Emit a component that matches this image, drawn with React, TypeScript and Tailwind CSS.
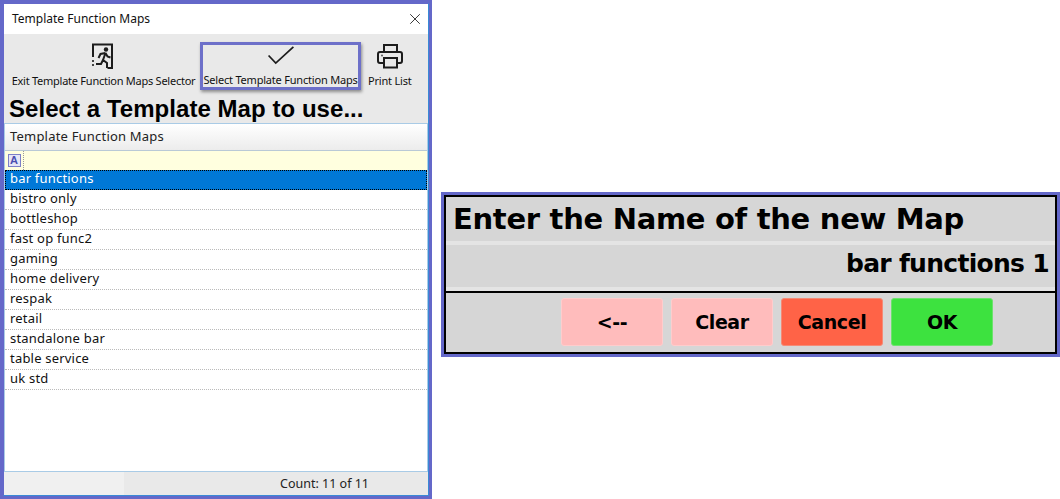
import { X } from "lucide-react";

const maps = [
  "bar functions",
  "bistro only",
  "bottleshop",
  "fast op func2",
  "gaming",
  "home delivery",
  "respak",
  "retail",
  "standalone bar",
  "table service",
  "uk std",
];

const keypad = [
  { label: "<--", color: "bg-[#ffbcbc] border-[#ffcccc]" },
  { label: "Clear", color: "bg-[#ffbcbc] border-[#ffcccc]" },
  { label: "Cancel", color: "bg-[#ff6347] border-[#f58a76]" },
  { label: "OK", color: "bg-[#3de23f] border-[#6ce36d]" },
];

function ExitIcon() {
  return (
    <svg viewBox="0 0 22 26" className="-ml-[3px] h-[26px] w-[22px]" fill="none" stroke="#1c1c1c">
      <path d="M2 14V1.500h19V25h-4.500" strokeWidth="2" />
      <path d="M2 17v2M2 21v2" strokeWidth="1.6" />
      <circle cx="15" cy="6.500" r="2.200" fill="#1c1c1c" stroke="none" />
      <path d="M14.500 10l-2.500 7M14.500 10l-5 1-2 4M14.500 10l2 3.500 3 1M12 17l-2 4H5M12 17l4 3v5" strokeWidth="2" />
    </svg>
  );
}

function CheckIcon() {
  return (
    <svg viewBox="0 0 30 22" className="h-[22px] w-[30px]" fill="none" stroke="#1c1c1c" strokeWidth="1.8">
      <path d="M2 11l7.500 8L28 2" />
    </svg>
  );
}

function PrinterIcon() {
  return (
    <svg viewBox="0 0 26 26" className="size-[26px]" fill="none" stroke="#1c1c1c" strokeWidth="2">
      <path d="M7 9V2h13v7" />
      <path d="M6 20H3a2 2 0 0 1-2-2v-7a2 2 0 0 1 2-2h20a2 2 0 0 1 2 2v7a2 2 0 0 1-2 2h-3" />
      <path d="M7 15h13v9.500H7z" />
      <circle cx="5" cy="12.500" r="1" fill="#555" stroke="none" />
    </svg>
  );
}

export default function App() {
  return (
    <div className="flex h-[499px] w-[1060px] items-start overflow-hidden bg-white font-['Noto_Sans',sans-serif]">
      <div className="h-[499px] w-[432px] shrink-0 border-[3px] border-[#6468c9]">
        <div className="flex h-full flex-col border border-[#3a8ad6] border-l-[#6468c9] border-t-[#6468c9] bg-[#e9e9e9]">
          <div className="flex h-[30px] shrink-0 items-center justify-between bg-white pl-2 pr-1 text-[12px] text-[#111]">
            <span>Template Function Maps</span>
            <X size={18} strokeWidth={1.1} />
          </div>

          <div className="flex h-[62px] shrink-0 items-start pl-[7px] text-[11px] tracking-[-0.25px] text-[#111]">
            <div className="flex w-[185px] flex-col items-center pt-[9px]">
              <ExitIcon />
              <span className="mt-[4px] whitespace-nowrap">Exit Template Function Maps Selector</span>
            </div>
            <div className="ml-[4px] mt-[8px] flex h-[48px] w-[161px] flex-col items-center border-[3px] border-[#6d70c9] tracking-[-0.2px] shadow-[1px_2px_3px_rgba(0,0,0,0.4)]">
              <CheckIcon />
              <span className="mt-[7px] whitespace-nowrap leading-[14px]">Select Template Function Maps</span>
            </div>
            <div className="ml-[7px] flex flex-col items-center pt-[9px] tracking-[-0.2px]">
              <PrinterIcon />
              <span className="mt-[4px] whitespace-nowrap">Print List</span>
            </div>
          </div>

          <h1 className="h-[27px] shrink-0 pl-[5px] font-['Liberation_Sans',sans-serif] text-[24px] font-bold leading-[25px] tracking-[0.05px] text-black">
            Select a Template Map to use...
          </h1>

          <div className="flex min-h-0 flex-1 flex-col border border-[#a9cbe6] bg-white">
            <div className="flex h-[27px] shrink-0 items-center border-b border-[#b9c9d6] bg-gradient-to-b from-white to-[#ececec] pl-[5px] text-[13px] tracking-[0.2px] text-[#222]">
              Template Function Maps
            </div>
            <div className="flex h-[19px] shrink-0 items-center bg-[#ffffdf]">
              <div className="flex h-full w-[19px] items-center justify-center border-r border-dotted border-[#999]">
                <span className="flex size-[13px] items-center justify-center border border-[#7c80c8] bg-[#e6e6f6] font-['Liberation_Sans',sans-serif] text-[11px] font-bold leading-none text-[#4a4fb0]">
                  A
                </span>
              </div>
            </div>
            {maps.map((name, i) => (
              <div
                key={name}
                className={
                  i === 0
                    ? "flex h-[20px] shrink-0 items-center border border-dotted border-black bg-[#0078d7] pb-[2px] pl-[4px] text-[13px] tracking-[0.2px] text-white"
                    : "flex h-[20px] shrink-0 items-center border-b border-dotted border-[#bbbbbb] pb-[2px] pl-[5px] text-[13px] tracking-[0.2px] text-[#111]"
                }
              >
                {name}
              </div>
            ))}
          </div>

          <div className="flex h-[23px] shrink-0 text-[12.500px] text-[#222]">
            <div className="w-[120px] bg-[#f0f0f0]" />
            <div className="flex-1 pl-[156px] leading-[24px]">Count: 11 of 11</div>
          </div>
        </div>
      </div>

      <div className="ml-[9px] mt-[192px] flex h-[165px] w-[619px] shrink-0 flex-col border-[3px] border-[#6468c9] font-['DejaVu_Sans',sans-serif] font-bold text-black">
        <div className="flex h-full flex-col border-2 border-black bg-[#d6d6d6]">
          <div className="h-[44px] shrink-0 pl-[7px] text-[29px] leading-[44px] tracking-[-0.3px]">
            Enter the Name of the new Map
          </div>
          <div className="h-[50px] shrink-0 border-y-4 border-[#e4e4e4] pr-[6px] text-right text-[25px] leading-[38px] tracking-[-0.7px]">
            bar functions 1
          </div>
          <div className="flex flex-1 items-start gap-2 border-t-2 border-black pl-[115px] pt-[5px]">
            {keypad.map((key) => (
              <div
                key={key.label}
                className={`flex h-[48px] w-[102px] items-center justify-center rounded-[3px] border text-[19px] tracking-[-0.4px] ${key.color}`}
              >
                {key.label}
              </div>
            ))}
          </div>
        </div>
      </div>
    </div>
  );
}
